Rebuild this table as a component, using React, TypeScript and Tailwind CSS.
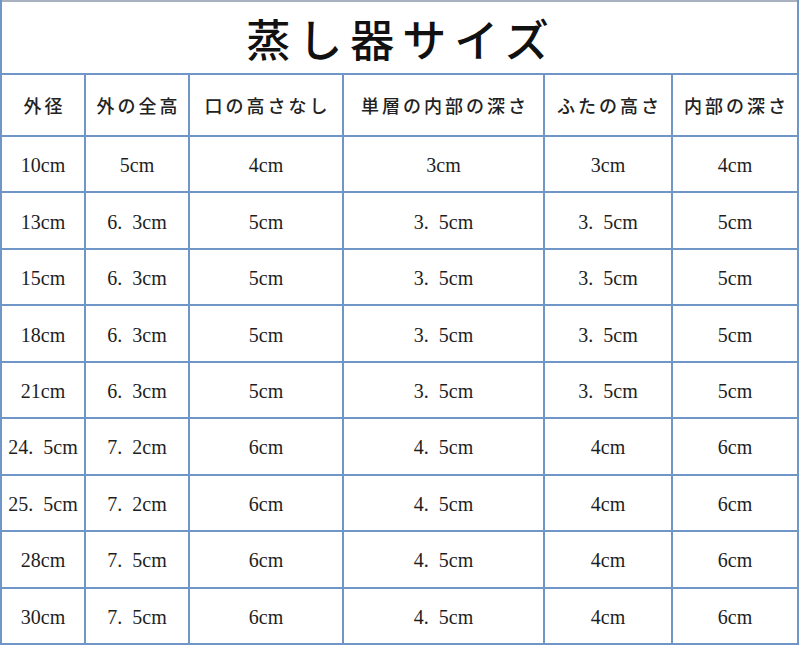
const headers = ["外径", "外の全高", "口の高さなし", "単層の内部の深さ", "ふたの高さ", "内部の深さ"];

// "." plus an en space gives the wide gap after the point seen in the table
const d = (s: string) => s.replace(".", ".\u2002");

const rows: string[][] = [
  ["10cm", "5cm", "4cm", "3cm", "3cm", "4cm"],
  ["13cm", "6.3cm", "5cm", "3.5cm", "3.5cm", "5cm"],
  ["15cm", "6.3cm", "5cm", "3.5cm", "3.5cm", "5cm"],
  ["18cm", "6.3cm", "5cm", "3.5cm", "3.5cm", "5cm"],
  ["21cm", "6.3cm", "5cm", "3.5cm", "3.5cm", "5cm"],
  ["24.5cm", "7.2cm", "6cm", "4.5cm", "4cm", "6cm"],
  ["25.5cm", "7.2cm", "6cm", "4.5cm", "4cm", "6cm"],
  ["28cm", "7.5cm", "6cm", "4.5cm", "4cm", "6cm"],
  ["30cm", "7.5cm", "6cm", "4.5cm", "4cm", "6cm"],
];

export default function App() {
  return (
    <div className="w-[800px] h-[645px] bg-white overflow-hidden">
      <div className="w-[799px] h-[645px] bg-[#6f96c6] px-[2px] pb-[2px] grid grid-cols-[82px_102px_152px_199px_126px_124px] grid-rows-[73px_60px_repeat(9,1fr)] gap-[2px]">
        <div className="col-span-6 bg-white border-t-2 border-[#a7b1bf] flex items-center justify-center pl-[4px] text-[44px] tracking-[8px] text-[#111] font-['Noto_Sans_CJK_JP',sans-serif] font-medium">
          蒸し器サイズ
        </div>
        {headers.map((h) => (
          <div
            key={h}
            className="bg-white flex items-center justify-center pl-[3px] text-[18px] tracking-[3px] text-[#222] font-['Noto_Sans_CJK_JP',sans-serif] font-medium"
          >
            {h}
          </div>
        ))}
        {rows.map((r, i) =>
          r.map((c, j) => (
            <div
              key={`${i}-${j}`}
              className="bg-white flex items-center justify-center pt-[2px] text-[20px] text-[#1e1e1e] whitespace-pre font-['Liberation_Serif','Noto_Sans_CJK_JP',serif]"
            >
              {d(c)}
            </div>
          )),
        )}
      </div>
    </div>
  );
}
